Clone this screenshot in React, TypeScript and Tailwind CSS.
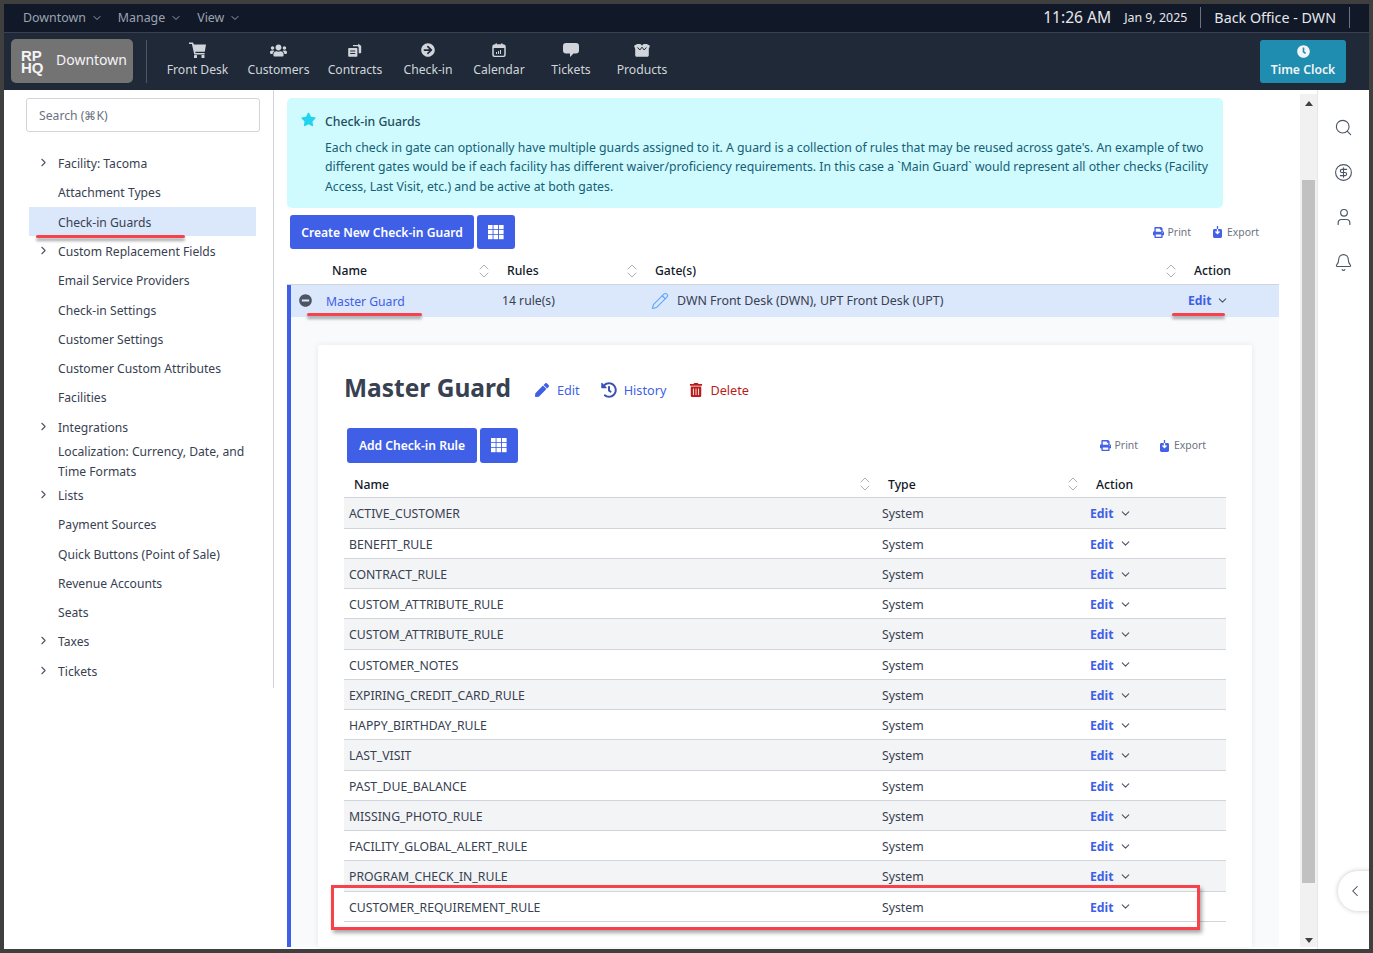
import React from "react";
import { FaUsers, FaArrowCircleRight, FaStar, FaMinusCircle, FaPen, FaHistory, FaTrashAlt, FaPrint, FaClock } from "react-icons/fa";
import { ChevronDown, ChevronRight, ChevronUp, ChevronLeft, Search, CircleDollarSign, User, Bell, Pencil } from "lucide-react";

const side = [
  ["Facility: Tacoma", 1], ["Attachment Types", 0], ["Check-in Guards", 0], ["Custom Replacement Fields", 1], ["Email Service Providers", 0],
  ["Check-in Settings", 0], ["Customer Settings", 0], ["Customer Custom Attributes", 0], ["Facilities", 0], ["Integrations", 1],
  ["Localization: Currency, Date, and Time Formats", 0], ["Lists", 1], ["Payment Sources", 0], ["Quick Buttons (Point of Sale)", 0],
  ["Revenue Accounts", 0], ["Seats", 0], ["Taxes", 1], ["Tickets", 1],
] as [string, number][];

const rules = ["ACTIVE_CUSTOMER","BENEFIT_RULE","CONTRACT_RULE","CUSTOM_ATTRIBUTE_RULE","CUSTOM_ATTRIBUTE_RULE","CUSTOMER_NOTES","EXPIRING_CREDIT_CARD_RULE","HAPPY_BIRTHDAY_RULE","LAST_VISIT","PAST_DUE_BALANCE","MISSING_PHOTO_RULE","FACILITY_GLOBAL_ALERT_RULE","PROGRAM_CHECK_IN_RULE","CUSTOMER_REQUIREMENT_RULE"];

function Grid() {
  return (
    <svg width="16" height="15" viewBox="0 0 16 15" fill="#fff">
      {[0, 5.5, 11].map((x) => [0, 5, 10].map((y) => <rect key={`${x}-${y}`} x={x} y={y} width="4.6" height="4.2" />))}
    </svg>
  );
}

function Sort() {
  return (
    <span className="flex flex-col items-center text-[#9ca3af]">
      <ChevronUp size={16} strokeWidth={1.3} className="-mb-[8px]" />
      <ChevronDown size={16} strokeWidth={1.3} />
    </span>
  );
}

function ExportIcon() {
  return (
    <svg width="9" height="12" viewBox="0 0 9 12">
      <rect x="0" y="3" width="9" height="9" rx="1.4" fill="#4361e6" />
      <path d="M4.5 0v7.5M2.5 5.5l2 2 2-2" stroke="#fff" strokeWidth="1.3" fill="none" />
      <path d="M4.5 0v3" stroke="#4361e6" strokeWidth="1.3" />
    </svg>
  );
}

function PrintExport() {
  return (
    <div className="flex items-center pt-[1px] text-[10.4px] text-[#6b7280]">
      <span className="flex items-center gap-[4px]"><FaPrint size={11} className="text-[#4361e6]" />Print</span>
      <span className="ml-[22px] flex items-center gap-[5px]"><ExportIcon />Export</span>
    </div>
  );
}

function Red({ cls }: { cls: string }) {
  return <div className={`absolute h-[3px] rounded-full bg-[#f6424a] shadow-[0_3px_3px_rgba(0,0,0,0.35)] ${cls}`} />;
}

function CartIcon() {
  return (
    <svg width="17" height="16" viewBox="0 0 17 16" fill="#d1d5db">
      <path d="M0 .4h4l.9 2.100H17l-1.200 7.300H6.300l.3 1.300h9v1.500H5.300L2.900 1.900H0z" />
      <rect x="5" y="13" width="3" height="3" rx=".6" />
      <rect x="12.500" y="13" width="3" height="3" rx=".6" />
    </svg>
  );
}
function ContractIcon() {
  return (
    <svg width="14" height="15" viewBox="0 0 14 14" fill="#d1d5db">
      <path d="M1 4.5h7.600a.8.8 0 0 1 .8.8v7.200a.8.8 0 0 1-.8.8H1a.8.8 0 0 1-.8-.8V5.300a.8.8 0 0 1 .8-.8zM2.200 7v1h5V7zm0 2.500v1h5v-1z" fillRule="evenodd" />
      <path d="M5 1.600h5.200V0l3 2.500v6.300c0 .6-.4 1-1 1h-1.500V4.200c0-.9-.6-1.500-1.500-1.500H5z" />
    </svg>
  );
}
function CalIcon() {
  return (
    <svg width="14" height="14" viewBox="0 0 14 14">
      <rect x="1" y="2" width="12" height="11.400" rx="2" fill="none" stroke="#d1d5db" strokeWidth="1.500" />
      <rect x="1" y="2" width="12" height="3" fill="#d1d5db" />
      <rect x="3.500" y="0.400" width="1.500" height="2.500" fill="#d1d5db" /><rect x="9" y="0.400" width="1.500" height="2.500" fill="#d1d5db" />
      <path d="M4 9h1v2H4zM6 8h1v3H6zM8 7h1v4H8z" fill="#d1d5db" />
    </svg>
  );
}
function BubbleIcon() {
  return (
    <svg width="16" height="14" viewBox="0 0 16 14" fill="#d1d5db">
      <path d="M3 0h10a3 3 0 0 1 3 3v4.500a3 3 0 0 1-3 3h-2.500L7 14v-3.500H3a3 3 0 0 1-3-3V3a3 3 0 0 1 3-3z" />
    </svg>
  );
}
function BoxIcon() {
  return (
    <svg width="16" height="13" viewBox="0 0 16 13" fill="#d1d5db">
      <path d="M0 1.800 3.200 0h3.200L8 1.500 9.600 0h3.200L16 1.800l-1.200 3v6.400c0 .9-.6 1.500-1.400 1.500H2.600c-.8 0-1.400-.6-1.400-1.500V4.800z" />
      <path d="M3.600 3.400 5.800 6 8 3.200 10.200 6l2.200-2.600" stroke="#1f2937" strokeWidth="1" fill="none" />
    </svg>
  );
}

const nav: [React.ReactNode, string, string][] = [
  [<CartIcon />, "Front Desk", "w-[81px]"],
  [<FaUsers size={17} className="text-[#d1d5db]" />, "Customers", "w-[81px]"],
  [<ContractIcon />, "Contracts", "w-[72px]"],
  [<FaArrowCircleRight size={14} className="text-[#d1d5db]" />, "Check-in", "w-[74px]"],
  [<CalIcon />, "Calendar", "w-[68px]"],
  [<BubbleIcon />, "Tickets", "w-[76px]"],
  [<BoxIcon />, "Products", "w-[66px]"],
];

export default function App() {
  return (
    <div className="relative flex h-[953px] w-[1373px] flex-col overflow-hidden border-[4px] border-[#3f3f3f] bg-white text-[12.200px] text-[#374151]" style={{ fontFamily: '"Noto Sans", sans-serif' }}>
      {/* top bar */}
      <div className="flex h-[29px] shrink-0 items-center border-b border-[#374151] bg-[#111827] pl-[19px] text-[12.400px] text-[#9ca3af]">
        <span>Downtown</span><ChevronDown size={12} className="ml-[5px]" />
        <span className="ml-[15px]">Manage</span><ChevronDown size={12} className="ml-[5px]" />
        <span className="ml-[15px]">View</span><ChevronDown size={12} className="ml-[5px]" />
        <div className="ml-auto flex items-center text-[#e5e7eb]">
          <span className="text-[15.600px]">11:26 AM</span>
          <span className="ml-[13px] text-[12.400px]">Jan 9, 2025</span>
          <span className="ml-[13px] h-[21px] w-px bg-[#6b7280]" />
          <span className="ml-[13px] text-[14.300px]">Back Office - DWN</span>
          <span className="ml-[13px] mr-[19px] h-[21px] w-px bg-[#6b7280]" />
        </div>
      </div>
      {/* nav */}
      <div className="flex h-[57px] shrink-0 items-center bg-[#1f2937] pl-[7px] pr-[23px]">
        <div className="-mt-[1px] flex h-[44px] w-[122px] items-center rounded-[5px] bg-[#737373] pl-[10px] text-[#f3f4f6]">
          <span className="w-[26px] pt-[1px] text-[15px] font-bold leading-[12px]" style={{ fontFamily: '"Liberation Sans", sans-serif' }}>RP HQ</span>
          <span className="-mt-[3px] ml-[9px] text-[14px]">Downtown</span>
        </div>
        <div className="ml-[13px] mr-[10px] h-[43px] w-px bg-[#4b5563]" />
        {nav.map(([icon, label, w]) => (
          <div key={label} className={`-mt-[5px] flex h-[40px] flex-col items-center text-[12.200px] leading-[18px] text-[#d1d5db] ${w}`}>
            <span className="flex h-[22px] items-center">{icon}</span>
            <span>{label}</span>
          </div>
        ))}
        <div className="ml-auto flex h-[43px] w-[86px] flex-col items-center justify-center rounded-[3px] bg-[#1f8db0] font-semibold text-[12.200px] leading-[18px] text-[#f3f4f6]">
          <FaClock size={13} className="mb-[3px]" />
          Time Clock
        </div>
      </div>
      {/* main */}
      <div className="flex min-h-0 flex-1">
        <aside className="h-[598px] w-[270px] shrink-0 border-r border-[#d1d5db] pl-[22px] pr-[13px] pt-[8px]">
          <div className="flex h-[34px] w-[234px] items-center rounded-[3px] border border-[#d1d5db] pl-[12px] pt-[2px] text-[12.200px] text-[#6b7280]">Search (⌘K)</div>
          <div className="mt-[16.400px] -ml-[22px]">
            {side.map(([t, c]) => {
              const sel = t === "Check-in Guards";
              const long = t.startsWith("Localization");
              return (
                <div key={t} className={`ml-[25px] flex w-[227px] items-center pt-[2px] ${long ? "h-[39px]" : "h-[29.300px]"} ${sel ? "bg-[#dbe7fb]" : ""} text-[12.150px] leading-[20px] text-[#374151]`}>
                  <span className="flex w-[29px] shrink-0 justify-center">{c ? <ChevronRight size={13} className="-mt-[3px] text-[#4b5563]" /> : null}</span>
                  <span className="pr-[4px]">{t}</span>
                </div>
              );
            })}
          </div>
        </aside>
        <main className="w-[1026px] shrink-0 overflow-hidden pl-[13px] pt-[8px]">
          <div className="flex h-[110px] w-[936px] rounded-[5px] bg-[#cffafe] pl-[14px] pt-[14px]">
            <FaStar size={15} className="text-[#22d3ee]" />
            <div className="ml-[9px] w-[885px] text-[12.250px] leading-[19.500px] text-[#155e75]">
              <div className="font-medium text-[#1f4e5f]">Check-in Guards</div>
              <p className="mt-[6px]">Each check in gate can optionally have multiple guards assigned to it. A guard is a collection of rules that may be reused across gate's. An example of two different gates would be if each facility has different waiver/proficiency requirements. In this case a `Main Guard` would represent all other checks (Facility Access, Last Visit, etc.) and be active at both gates.</p>
            </div>
          </div>
          <div className="mt-[7px] flex h-[34px] w-[972px] items-center pl-[3px]">
            <div className="flex h-full w-[184px] items-center justify-center rounded-[3px] bg-[#3f5fe6] pt-[2px] text-[12.100px] font-semibold text-white">Create New Check-in Guard</div>
            <div className="ml-[3px] flex h-full w-[38px] items-center justify-center rounded-[3px] bg-[#3f5fe6]"><Grid /></div>
            <div className="ml-auto"><PrintExport /></div>
          </div>
          <div className="mt-[8px] grid h-[28px] w-[992px] grid-cols-[205px_148px_539px_1fr] items-center border-b border-[#d1d5db] text-[12.200px] font-medium text-[#111827]">
            <div className="flex items-center justify-between pl-[45px]"><span className="pt-[2px]">Name</span><Sort /></div>
            <div className="flex items-center justify-between pl-[15px]"><span className="pt-[2px]">Rules</span><Sort /></div>
            <div className="flex items-center justify-between pl-[15px]"><span className="pt-[2px]">Gate(s)</span><Sort /></div>
            <div className="pl-[15px] pt-[2px]">Action</div>
          </div>
          <div className="w-[992px] border-l-[4px] border-[#3f5fe6] bg-[#f9fafb]">
            <div className="grid h-[32px] grid-cols-[197px_148px_539px_1fr] items-center bg-[#dbe7fb] text-[12.200px]">
              <div className="flex items-center pl-[8px]">
                <FaMinusCircle size={13} className="text-[#4b5563]" />
                <span className="ml-[14px] pt-[2px] text-[#3f5fe6]">Master Guard</span>
              </div>
              <div className="pl-[14px] pt-[1px]">14 rule(s)</div>
              <div className="flex items-center pl-[15px]">
                <Pencil size={18} strokeWidth={1.5} className="text-[#60a5fa]" />
                <span className="ml-[8px] pt-[1px] text-[12.400px]">DWN Front Desk (DWN), UPT Front Desk (UPT)</span>
              </div>
              <div className="flex items-center pl-[13px]"><span className="pt-[1px] font-bold text-[#3f5fe6]">Edit</span><ChevronDown size={13} className="ml-[5px] text-[#4b5563]" /></div>
            </div>
            <div className="pl-[27px] pt-[28px]">
              <div className="h-[602px] w-[934px] rounded-[2px] bg-white pl-[26px] pt-[27px] shadow-[0_0_6px_rgba(0,0,0,0.08)]">
                <div className="flex h-[36px] items-center">
                  <h1 className="-mt-[3px] text-[24.500px] font-bold text-[#374151]">Master Guard</h1>
                  <span className="ml-[24px] flex items-center text-[12.700px] text-[#3f5fe6]"><FaPen size={14} /><span className="ml-[8px] pt-[1px]">Edit</span></span>
                  <span className="ml-[21px] flex items-center text-[12.700px] text-[#3f5fe6]"><FaHistory size={16} className="text-[#3b52b4]" /><span className="ml-[7px] pt-[1px]">History</span></span>
                  <span className="ml-[23px] flex items-center text-[12.700px] text-[#b91c1c]"><FaTrashAlt size={14} /><span className="ml-[7px] pt-[1px]">Delete</span></span>
                </div>
                <div className="mt-[20px] flex h-[35px] w-[862px] items-center pl-[3px]">
                  <div className="flex h-full w-[130px] items-center justify-center rounded-[3px] bg-[#3f5fe6] pt-[2px] text-[12.100px] font-semibold text-white">Add Check-in Rule</div>
                  <div className="ml-[3px] flex h-full w-[38px] items-center justify-center rounded-[3px] bg-[#3f5fe6]"><Grid /></div>
                  <div className="ml-auto"><PrintExport /></div>
                </div>
                <div className="mt-[7px] w-[882px] text-[12.250px]">
                  <div className="grid h-[28.400px] grid-cols-[538px_208px_1fr] items-center border-b border-[#d1d5db] font-medium text-[#111827]">
                    <div className="flex items-center justify-between pl-[10px] pr-[9px]"><span className="pt-[3px]">Name</span><Sort /></div>
                    <div className="flex items-center justify-between pl-[6px] pr-[9px]"><span className="pt-[3px]">Type</span><Sort /></div>
                    <div className="pl-[6px] pt-[3px]">Action</div>
                  </div>
                  {rules.map((r, i) => (
                    <div key={i} className={`grid h-[30.250px] grid-cols-[538px_208px_1fr] items-center border-b border-[#d1d5db] pt-[3px] ${i % 2 === 0 ? "bg-[#f3f4f6]" : "bg-white"}`}>
                      <div className="pl-[5px]">{r}</div>
                      <div>System</div>
                      <div className="flex items-center"><span className="font-bold text-[#3f5fe6]">Edit</span><ChevronDown size={13} className="-mt-[2px] ml-[5px] text-[#4b5563]" /></div>
                    </div>
                  ))}
                </div>
              </div>
            </div>
          </div>
        </main>
        {/* scrollbar */}
        <div className="mt-[4px] mb-[2px] flex w-[17px] shrink-0 flex-col items-center bg-[#f1f1f1]">
          <div className="flex h-[18px] items-center"><div className="h-0 w-0 border-x-[4px] border-b-[5px] border-x-transparent border-b-[#404040]" /></div>
          <div className="mt-[68px] h-[703px] w-[13px] bg-[#c1c1c1]" />
          <div className="mt-auto flex h-[14px] items-center"><div className="h-0 w-0 border-x-[4px] border-t-[5px] border-x-transparent border-t-[#404040]" /></div>
        </div>
        <div className="flex flex-1 flex-col items-center border-l border-[#e5e7eb] pt-[28px] text-[#4b5563]">
          <Search size={19} strokeWidth={1.4} />
          <CircleDollarSign size={19} strokeWidth={1.4} className="mt-[26px]" />
          <User size={20} strokeWidth={1.4} className="mt-[25px]" />
          <Bell size={19} strokeWidth={1.4} className="mt-[26px]" />
        </div>
      </div>
      {/* overlays: annotations */}
      <div className="absolute right-[-4px] top-[866px] flex h-[42px] w-[36px] items-center rounded-l-full border border-r-0 border-[#e5e7eb] bg-white pl-[8px] shadow-[0_0_4px_rgba(0,0,0,0.15)]"><ChevronLeft size={18} strokeWidth={1.4} className="text-[#374151]" /></div>
      <Red cls="left-[32px] top-[231px] w-[149px]" />
      <Red cls="left-[303px] top-[309px] w-[115px]" />
      <Red cls="left-[1168px] top-[309px] w-[53px]" />
      <div className="absolute left-[327px] top-[881px] h-[45px] w-[869px] border-[3px] border-[#f6424a] shadow-[2px_3px_4px_rgba(0,0,0,0.35)]" />
    </div>
  );
}
